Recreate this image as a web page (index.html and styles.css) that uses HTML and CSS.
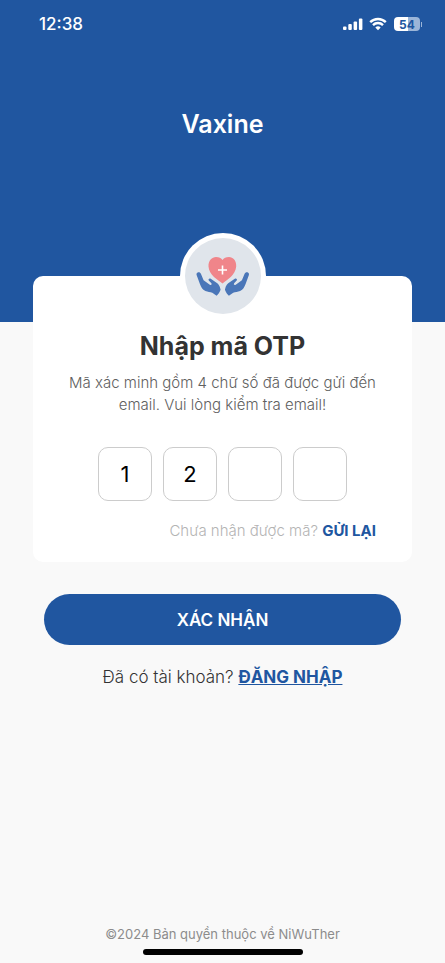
FILE: index.html
```html
<!DOCTYPE html>
<html lang="vi">
<head>
<meta charset="utf-8">
<meta name="viewport" content="width=device-width, initial-scale=1">
<title>Vaxine</title>
<link rel="stylesheet" href="styles.css">
</head>
<body>
<header class="hero">
  <div class="status">
    <time class="clock">12:38</time>
    <div class="indicators">
      <svg class="signal" viewBox="0 0 20 14" width="20" height="14" aria-hidden="true">
        <rect x="0" y="9.500" width="3.500" height="3.500" rx="1"/>
        <rect x="5.300" y="7" width="3.500" height="6" rx="1"/>
        <rect x="10.600" y="4.500" width="3.500" height="8.500" rx="1"/>
        <rect x="15.900" y="1.500" width="3.500" height="11.500" rx="1"/>
      </svg>
      <svg class="wifi" viewBox="0 0 18 14" width="18" height="14" aria-hidden="true">
        <path d="M1.200 5.100a11.200 11.200 0 0 1 15.600 0M4 8.100a7.100 7.100 0 0 1 10 0"/>
        <path class="wifi-dot" d="M9 13.200 6.300 10.500a3.900 3.900 0 0 1 5.400 0Z"/>
      </svg>
      <div class="battery"><span class="battery-body">54</span><i class="battery-tip"></i></div>
    </div>
  </div>
  <h1 class="brand">Vaxine</h1>
</header>
<main class="content">
  <form class="otp-form">
    <section class="card">
      <div class="logo">
        <svg viewBox="0 0 76 76" width="76" height="76" aria-hidden="true">
          <path class="heart" d="M37.500 45.500C33 42 24 37 23.500 28.500C23.200 22.500 27 19 31 19C34 19 36.300 20.200 37.500 22C38.700 20.200 41 19 44 19C48 19 51.500 22.500 51.200 28.500C50.500 37 42 42 37.500 45.500Z"/>
          <path class="cross" d="M37.500 27.500v9M33 32h9"/>
          <g id="hand" class="hand">
            <path d="M12.300 34.700C13.700 33.700 15.300 34.300 15.900 35.800L18.600 42.300L24.800 46.700C26 47.500 27.200 46.300 26.400 45.200L23.800 42.600C22.900 41.300 24.300 39.900 25.700 40.700L32.300 45.300C34.300 47 34.600 48.400 35.200 50.200L35.600 51.800C34.600 54.500 33.300 56.300 31.600 57.800L27.300 54.800C25.300 53.800 22.700 54 20.400 53C17.300 51.500 16.200 49.300 15 46.300L11.700 37.300C11.300 36.200 11.500 35.300 12.300 34.700Z"/>
          </g>
          <use href="#hand" class="hand" transform="translate(75.500 0) scale(-1 1)"/>
        </svg>
      </div>
      <h2 class="title">Nhập mã OTP</h2>
      <p class="description">Mã xác minh gồm 4 chữ số đã được gửi đến email. Vui lòng kiểm tra email!</p>
      <div class="codes">
        <input class="code" type="text" inputmode="numeric" maxlength="1" value="1" aria-label="Chữ số 1">
        <input class="code" type="text" inputmode="numeric" maxlength="1" value="2" aria-label="Chữ số 2">
        <input class="code" type="text" inputmode="numeric" maxlength="1" aria-label="Chữ số 3">
        <input class="code" type="text" inputmode="numeric" maxlength="1" aria-label="Chữ số 4">
      </div>
      <p class="resend">Chưa nhận được mã? <button class="resend-button" type="button">GỬI LẠI</button></p>
    </section>
    <button class="submit" type="submit">XÁC NHẬN</button>
  </form>
  <p class="login">Đã có tài khoản? <a href="#login">ĐĂNG NHẬP</a></p>
</main>
<footer class="footer">
  <p class="copyright">©2024 Bản quyền thuộc về NiWuTher</p>
  <div class="home-bar"></div>
</footer>
</body>
</html>
```
FILE: styles.css
```css
:root {
  --blue: #2056a0;
}
* {
  box-sizing: border-box;
}
body {
  margin: 0;
  min-height: 100vh;
  display: flex;
  flex-direction: column;
  background: #f9f9f9;
  color: #333;
  font-family: Inter, "Liberation Sans", sans-serif;
  font-size: 16px;
}
h1, h2, p {
  margin: 0;
}
button, input {
  font: inherit;
}
.hero {
  background: var(--blue);
  color: #fff;
  padding-bottom: 182px;
}
.status {
  display: flex;
  justify-content: space-between;
  align-items: center;
  height: 48px;
  padding: 0 23px 0 39px;
}
.clock {
  font-size: 17px;
  font-weight: 500;
}
.indicators {
  display: flex;
  align-items: center;
  gap: 6px;
}
.signal {
  fill: #fff;
}
.wifi {
  fill: none;
  stroke: #fff;
  stroke-width: 2.4;
}
.wifi .wifi-dot {
  fill: #fff;
  stroke: none;
}
.battery {
  display: flex;
  align-items: center;
  gap: 1px;
  margin-left: 1px;
}
.battery-body {
  display: flex;
  align-items: center;
  justify-content: center;
  width: 26px;
  height: 14px;
  border-radius: 4px;
  background: linear-gradient(90deg, #fff 54%, #9bb5d8 54%);
  color: var(--blue);
  font-size: 12px;
  font-weight: 700;
}
.battery-tip {
  width: 1px;
  height: 5px;
  background: #9bb5d8;
}
.brand {
  padding-top: 60px;
  font-size: 25px;
  line-height: 32px;
  font-weight: 600;
  text-align: center;
}
.content {
  flex: 1;
  margin-top: -46px;
  padding: 0 33px;
}
.card {
  display: flex;
  flex-direction: column;
  padding: 0 32px 20px;
  border-radius: 10px;
  background: #fff;
  text-align: center;
}
.logo {
  align-self: center;
  width: 86px;
  height: 86px;
  margin-top: -43px;
  padding: 5px;
  border-radius: 50%;
  background: #fff;
}
.logo svg {
  display: block;
  border-radius: 50%;
  background: #e0e5eb;
}
.heart {
  fill: #f0858a;
}
.cross {
  stroke: #fff;
  stroke-width: 1.6;
}
.hand {
  fill: #4a76b8;
}
.title {
  margin-top: 11px;
  font-size: 25px;
  line-height: 32px;
  font-weight: 700;
}
.description {
  margin-top: 10px;
  color: #606060;
  font-size: 15px;
  line-height: 22px;
  font-weight: 300;
}
.codes {
  display: flex;
  justify-content: center;
  gap: 11px;
  margin-top: 31px;
}
.code {
  width: 54px;
  height: 54px;
  padding: 0;
  border: 1px solid #ccc;
  border-radius: 10px;
  background: #fff;
  color: #000;
  font-size: 22px;
  text-align: center;
}
.resend {
  margin-top: 19px;
  padding-right: 4px;
  color: #b4b4b4;
  font-size: 15px;
  line-height: 22px;
  font-weight: 300;
  text-align: right;
}
.resend-button {
  padding: 0;
  border: 0;
  background: none;
  color: var(--blue);
  font-weight: 700;
}
.submit {
  display: block;
  width: calc(100% - 22px);
  height: 51px;
  margin: 32px auto 0;
  border: 0;
  border-radius: 26px;
  background: var(--blue);
  color: #fff;
  font-size: 17px;
  font-weight: 600;
}
.login {
  margin-top: 20px;
  font-size: 17px;
  line-height: 24px;
  font-weight: 300;
  text-align: center;
}
.login a {
  color: var(--blue);
  font-weight: 700;
}
.footer {
  padding-bottom: 8px;
  text-align: center;
}
.copyright {
  color: #8c8c8c;
  font-size: 13px;
  line-height: 20px;
}
.home-bar {
  width: 160px;
  height: 6px;
  margin: 5px auto 0;
  border-radius: 3px;
  background: #000;
}
```
